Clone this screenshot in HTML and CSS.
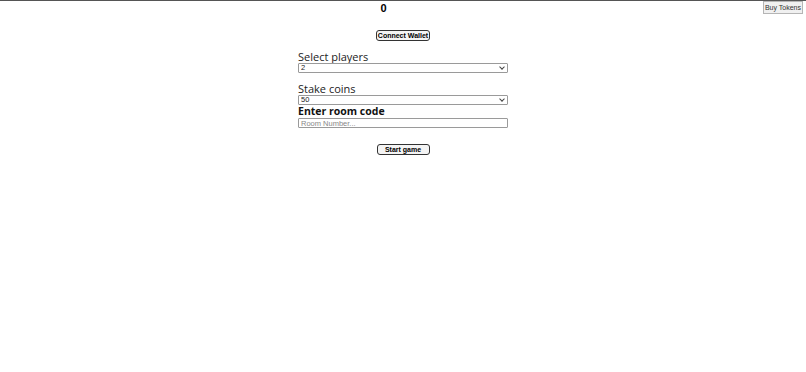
FILE: index.html
```html
<!DOCTYPE html>
<html>
<head>
<meta charset="utf-8">
<link rel="stylesheet" href="styles.css">
</head>
<body>
<div class="top">
  <div class="balance">0</div>
  <button class="buy">Buy Tokens</button>
</div>
<div class="center">
  <button class="pill">Connect Wallet</button>
</div>
<div class="form">
  <div class="label">Select players</div>
  <div class="select-wrap">
    <select class="field">
      <option>2</option>
    </select>
  </div>
  <div class="label label-gap">Stake coins</div>
  <div class="select-wrap">
    <select class="field">
      <option>50</option>
    </select>
  </div>
  <div class="label bold">Enter room code</div>
  <input class="field input" placeholder="Room Number...">
</div>
<div class="center start">
  <button class="pill">Start game</button>
</div>
</body>
</html>
```
FILE: styles.css
```css
html, body {
  margin: 0;
  background: #fff;
}
body {
  border-top: 1px solid #555;
  font-family: "Liberation Sans", Arial, sans-serif;
}
.top {
  display: flex;
  align-items: flex-start;
}
.balance {
  flex: 1;
  text-align: center;
  font-weight: bold;
  font-size: 11px;
  line-height: 13px;
  padding-top: 1px;
  padding-left: 4px;
}
.buy {
  font-family: "Liberation Sans", Arial, sans-serif;
  font-size: 7px;
  font-weight: normal;
  height: 13px;
  margin: 0 3px 0 0;
  padding: 0 1px;
  border: 1px solid #b5b5b5;
  background: #f0f0f0;
  color: #333;
}
.center {
  display: flex;
  justify-content: center;
  margin-top: 15px;
}
.pill {
  font-family: "Liberation Sans", Arial, sans-serif;
  font-weight: bold;
  font-size: 7px;
  height: 11px;
  padding: 0 1px;
  border: 1px solid #333;
  border-radius: 3px;
  background: #f4f4f4;
  color: #000;
  line-height: 9px;
}
.start .pill {
  width: 53px;
}
.form {
  width: 210px;
  margin: 9px auto 0;
  display: flex;
  flex-direction: column;
}
.label {
  font-family: "Open Sans", sans-serif;
  font-size: 11px;
  line-height: 13px;
  color: #222;
}
.label-gap {
  margin-top: 9px;
}
.bold {
  font-weight: bold;
  font-size: 10.5px;
  line-height: 13px;
  color: #111;
}
.select-wrap {
  position: relative;
  height: 10px;
}
.select-wrap::after {
  content: "";
  position: absolute;
  right: 4px;
  top: 2px;
  width: 3px;
  height: 3px;
  border-right: 1px solid #444;
  border-bottom: 1px solid #444;
  transform: rotate(45deg);
  pointer-events: none;
}
.field {
  display: block;
  box-sizing: border-box;
  width: 210px;
  height: 10px;
  font-family: "Liberation Sans", Arial, sans-serif;
  font-size: 7.5px;
  line-height: 8px;
  padding: 0 2px;
  margin: 0;
  border: 1px solid #9a9a9a;
  border-radius: 1px;
  background: #fff;
  color: #222;
  -webkit-appearance: none;
  appearance: none;
}
.input {
  height: 10px;
}
.input::placeholder {
  color: #888;
}
.start {
  margin-top: 16px;
}
```
